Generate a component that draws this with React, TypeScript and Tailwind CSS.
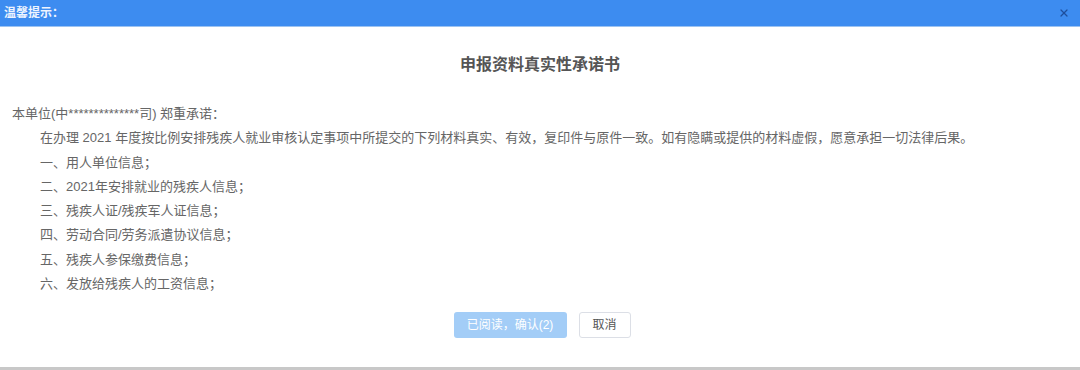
import { X } from "lucide-react";

const items = [
  "一、用人单位信息；",
  "二、2021年安排就业的残疾人信息；",
  "三、残疾人证/残疾军人证信息；",
  "四、劳动合同/劳务派遣协议信息；",
  "五、残疾人参保缴费信息；",
  "六、发放给残疾人的工资信息；",
];

const App = () => {
  return (
    <div
      className="w-[1080px] h-[370px] bg-white flex flex-col overflow-hidden"
      style={{ fontFamily: '"Liberation Sans", "Noto Sans CJK SC", sans-serif' }}
    >
      <div className="h-[27px] bg-[#3d8cf0] border-b border-[#9cc3f2] flex items-center justify-between pl-[4px] pr-[10px]">
        <span className="text-[12px] text-[#eef4ff] font-bold">温馨提示：</span>
        <X className="w-[12px] h-[12px] text-[#1e4f9c]" strokeWidth={2.5} />
      </div>
      <div className="flex-1 flex flex-col">
        <h2 className="mt-[26px] text-center text-[16px] font-bold text-[#555555] leading-[24px]">
          申报资料真实性承诺书
        </h2>
        <div className="mt-[25px] pl-[12px] text-[13px] text-[#666666] leading-[24.3px]">
          <p>本单位(中**************司) 郑重承诺：</p>
          <div className="pl-[28px]">
            <p>
              在办理 2021 年度按比例安排残疾人就业审核认定事项中所提交的下列材料真实、有效，复印件与原件一致。如有隐瞒或提供的材料虚假，愿意承担一切法律后果。
            </p>
            {items.map((t) => (
              <p key={t}>{t}</p>
            ))}
          </div>
        </div>
        <div className="mt-[16px] flex justify-center gap-[12px] pl-[4px]">
          <button className="w-[113px] h-[26px] rounded-[3px] bg-[#a3cdf7] text-white text-[12px]">
            已阅读，确认(2)
          </button>
          <button className="w-[52px] h-[26px] rounded-[3px] border border-[#dcdfe6] bg-white text-[#555555] text-[12px]">
            取消
          </button>
        </div>
      </div>
      <div className="h-[3px] bg-[#c8c8c8]" />
    </div>
  );
};

export default App;
